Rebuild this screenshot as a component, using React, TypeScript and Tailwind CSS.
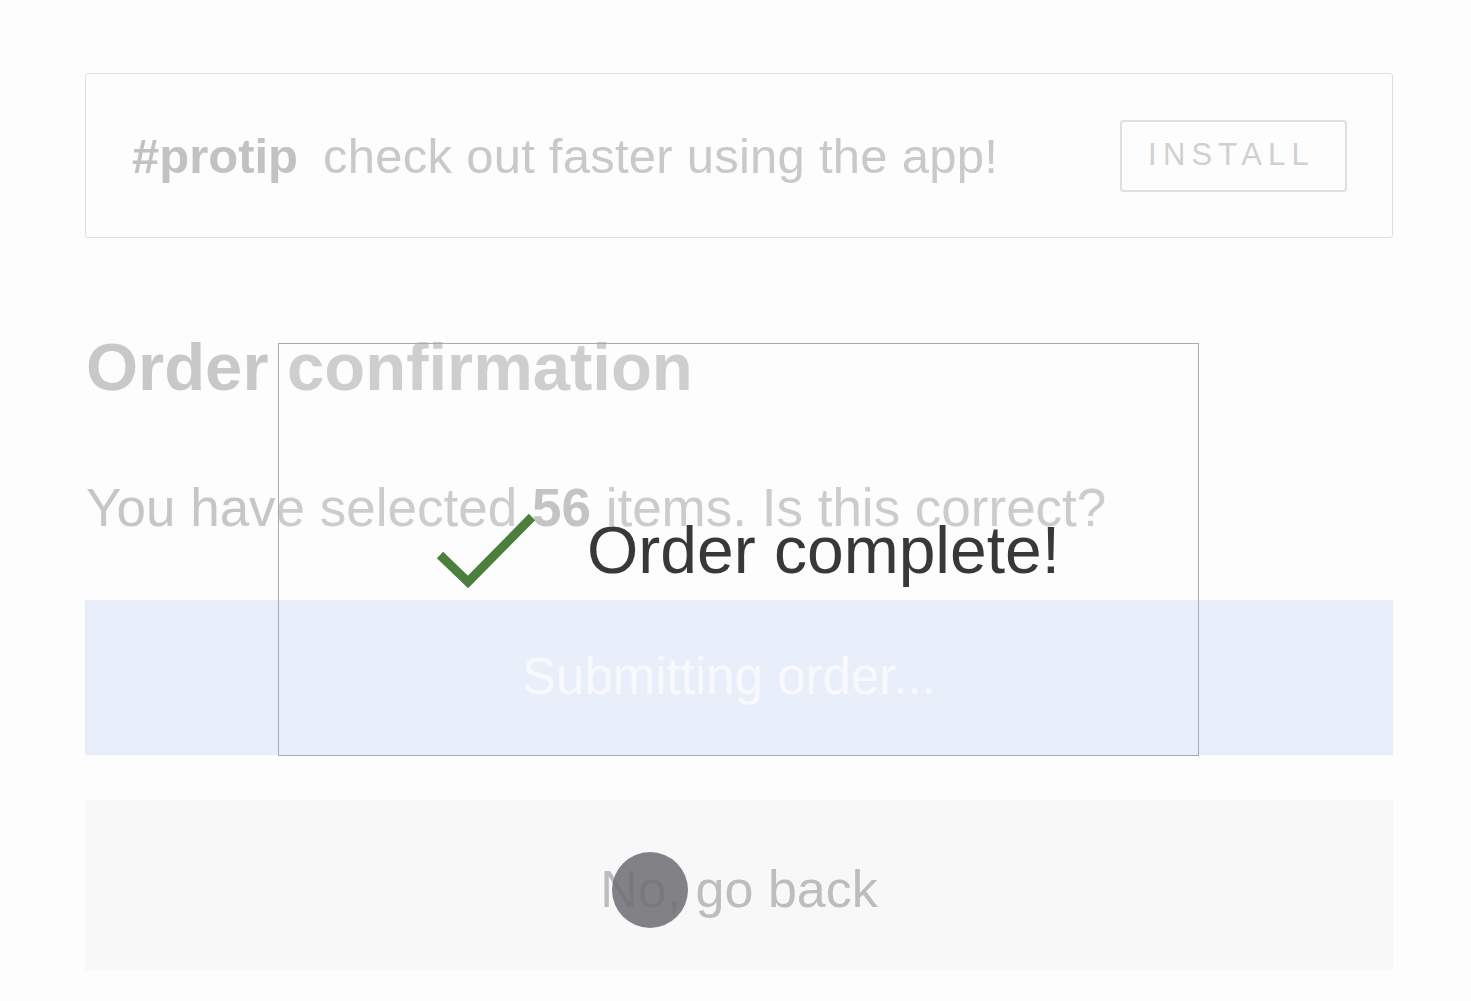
import React from 'react';

const sans = { fontFamily: '"Liberation Sans", Arial, sans-serif' };

const CheckMark: React.FC = () => (
  <svg width="102" height="76" viewBox="0 0 102 76" fill="none">
    <path d="M5 42 L33 69 L97 4" stroke="#4b7f3d" strokeWidth="9" strokeLinecap="butt" strokeLinejoin="miter" />
  </svg>
);

const App: React.FC = () => {
  return (
    <div className="relative min-h-[1001px] w-full bg-[#fdfdfd] overflow-hidden" style={sans}>
      <div className="px-[85px] pt-[73px] pr-[78px]">
        {/* Protip banner */}
        <div className="h-[165px] border border-[#dedede] rounded-[3px] flex items-center justify-between pl-[46px] pr-[45px]">
          <p className="text-[49px] leading-none text-[#c9c9c9] mt-[2px]">
            <span className="font-bold text-[#c2c2c2]">#protip</span>
            <span className="ml-[25px] tracking-[0.005em]">check out faster using the app!</span>
          </p>
          <button className="w-[227px] h-[72px] border-2 border-[#e0e0e0] rounded-[4px] text-[31px] tracking-[0.2em] text-[#d0d0d0] flex items-center justify-center pr-[4px]">
            INSTALL
          </button>
        </div>

        {/* Heading */}
        <h1 className="mt-[95px] text-[67px] leading-none font-bold text-[#c8c8c8] pl-[1px]">Order confirmation</h1>

        <p className="mt-[81px] text-[53px] leading-none text-[#c6c6c6] pl-[1px]">
          You have selected <span className="font-bold text-[#bdbdbd]">56</span> items. Is this correct?
        </p>

        {/* Actions */}
        <button className="mt-[66px] w-full h-[155px] bg-[#e7edf9] text-[51px] text-[#f6f8fd] flex items-center justify-center pr-[20px]">
          Submitting order...
        </button>
        <button className="mt-[45px] w-full h-[170px] bg-[#f8f8f8] text-[52px] text-[#bdbdbd] flex items-center justify-center pt-[8px]">
          No, go back
        </button>
      </div>

      {/* Success modal */}
      <div className="absolute left-[278px] top-[343px] w-[921px] h-[413px] border border-[#a9abb3] bg-white/10 flex items-center justify-center gap-[50px] pl-[18px]">
        <div className="pt-[2px]">
          <CheckMark />
        </div>
        <span className="text-[66px] leading-none text-[#383838]">Order complete!</span>
      </div>

      {/* Tap indicator */}
      <div className="absolute left-[612px] top-[852px] w-[76px] h-[76px] rounded-full bg-[#6d6d72]/85" />
    </div>
  );
};

export default App;
